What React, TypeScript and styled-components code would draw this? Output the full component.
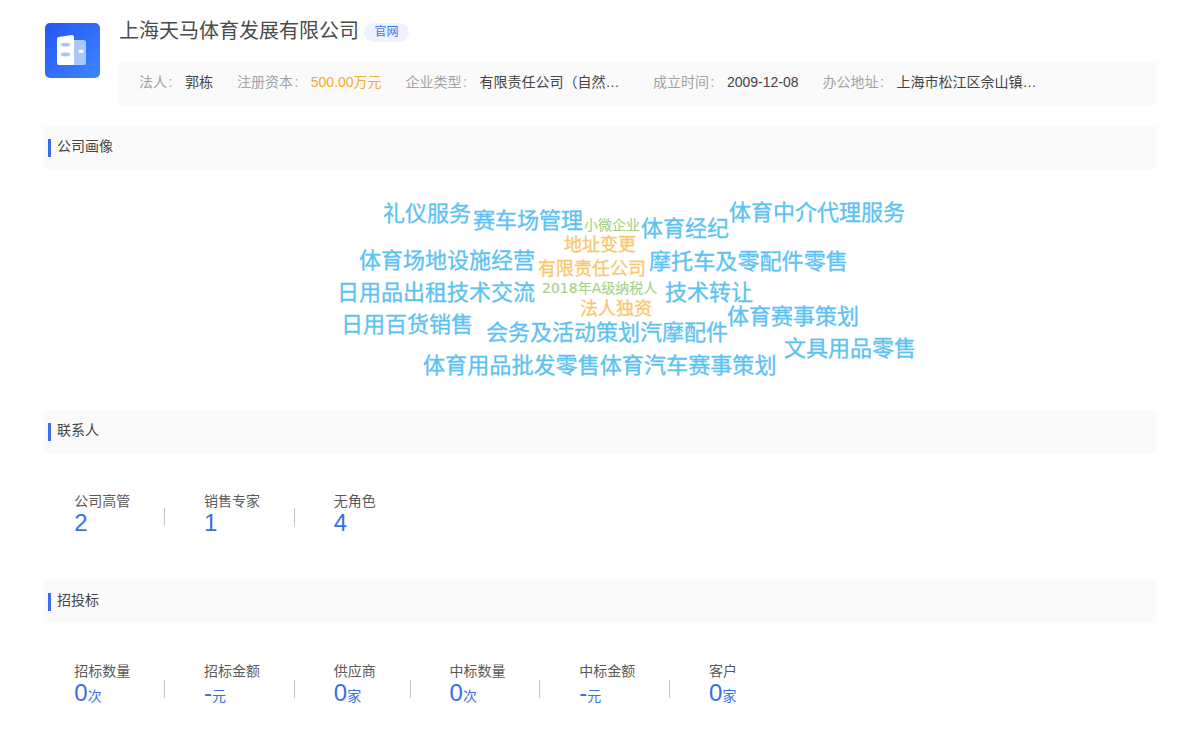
import React from "react";
import styled, { createGlobalStyle } from "styled-components";

const Global = createGlobalStyle`
  html, body { margin: 0; padding: 0; background: #fff; }
  body { font-family: "Liberation Sans", "Noto Sans CJK SC", sans-serif; color: #444; }
`;
const Page = styled.div`
  width: 1200px; height: 752px; overflow: hidden; box-sizing: border-box;
  padding: 0 44px;
`;
const Header = styled.header`
  display: flex; padding-top: 16px; height: 89px; box-sizing: content-box;
`;
const Logo = styled.svg`
  width: 55px; height: 55px; margin: 7px 19px 0 1px; flex: none;
`;
const HeaderBody = styled.div`
  flex: 1; min-width: 0; display: flex; flex-direction: column;
`;
const TitleRow = styled.div`
  display: flex; align-items: center; height: 30px;
`;
const Title = styled.h1`
  margin: 0; font-size: 20px; font-weight: 400; color: #4a4a4a; line-height: 30px;
`;
const Badge = styled.a`
  margin-left: 5px; margin-top: 3px; height: 19px; line-height: 19px; padding: 0 10.5px;
  border-radius: 10px; background: #eef3fd; color: #3f72e4; font-size: 12px;
`;
const InfoBar = styled.div`
  display: flex; align-items: center; height: 43px; margin-top: 16px; box-sizing: border-box;
  padding: 0 0 3px 20px; background: #fafafa; font-size: 14px; line-height: 20px;
`;
const InfoItem = styled.div`
  display: flex; margin-right: 24px; white-space: nowrap;
`;
const InfoLabel = styled.span`
  color: #a3a3a3; margin-right: 12px;
`;
const Colon = styled.span`
  margin-left: 1.5px; padding-right: 0.5px;
`;
const InfoValue = styled.span<{ $accent?: boolean; $clip?: boolean }>`
  color: ${(p) => (p.$accent ? "#f4ab35" : "#444")};
  ${(p) => (p.$clip ? "width: 149.5px; overflow: hidden; text-overflow: ellipsis;" : "")}
`;
const SectionHead = styled.div<{ $flush?: boolean }>`
  display: flex; align-items: center; height: 43px; background: #fafafa;
  padding-left: 4px; margin-top: ${(p) => (p.$flush ? 0 : 21)}px;
`;
const Bar = styled.i`
  display: block; width: 3px; height: 18px; background: #3a6ee8; margin-right: 6px;
`;
const SectionTitle = styled.h2`
  margin: -3px 0 0; font-size: 14px; font-weight: 400; color: #444; line-height: 16px;
`;
const Cloud = styled.div`
  position: relative; height: 241px;
  font-family: "DejaVu Sans", "Noto Sans CJK SC", sans-serif;
`;
const tones = { blue: "#5bc2f1", yellow: "#f9c86c", green: "#a6d184" };
const Word = styled.span<{ $x: number; $y: number; $size: number; $tone: keyof typeof tones }>`
  position: absolute; white-space: nowrap; line-height: 1; font-weight: 400;
  left: ${(p) => p.$x - 44}px; top: ${(p) => p.$y - 168 - p.$size / 2}px;
  font-size: ${(p) => p.$size}px; color: ${(p) => tones[p.$tone]};
  -webkit-text-stroke: ${(p) => (p.$size > 14 ? 0.3 : 0.1)}px ${(p) => tones[p.$tone]};
`;
const Stats = styled.div`
  display: flex; align-items: center; padding: 40px 0 43px 30.3px; margin-bottom: -21px;
`;
const Stat = styled.div`
  padding-right: 33.75px;
`;
const StatLabel = styled.div`
  font-size: 14px; line-height: 16px; color: #5a5a5a; white-space: nowrap;
`;
const StatValue = styled.div`
  font-size: 24px; line-height: 28px; color: #3a6ee8; white-space: nowrap;
`;
const Unit = styled.span`
  font-size: 14px;
`;
const Divider = styled.i`
  display: block; width: 1px; height: 18px; margin: 4px 39px 0 0; background: #c4c4c4;
`;

const words: [string, number, number, number, keyof typeof tones][] = [
  ["礼仪服务", 383, 213, 22, "blue"],
  ["赛车场管理", 473, 220, 22, "blue"],
  ["小微企业", 584, 224, 14, "green"],
  ["体育经纪", 641, 228, 22, "blue"],
  ["体育中介代理服务", 729, 212, 22, "blue"],
  ["地址变更", 564, 244, 18, "yellow"],
  ["体育场地设施经营", 359, 260, 22, "blue"],
  ["有限责任公司", 538, 268, 18, "yellow"],
  ["摩托车及零配件零售", 649, 260, 22.1, "blue"],
  ["日用品出租技术交流", 337, 292, 22, "blue"],
  ["2018年A级纳税人", 542, 287, 14, "green"],
  ["法人独资", 580, 308, 18, "yellow"],
  ["技术转让", 665, 292, 22, "blue"],
  ["日用百货销售", 341, 324, 22, "blue"],
  ["会务及活动策划汽摩配件", 486, 332, 22, "blue"],
  ["体育赛事策划", 727, 316, 22, "blue"],
  ["体育用品批发零售体育汽车赛事策划", 423, 364, 22.1, "blue"],
  ["文具用品零售", 784, 348, 22, "blue"],
];

type S = { label: string; value: string; unit?: string };
const StatRow = ({ items }: { items: S[] }) => (
  <Stats>
    {items.map((s, i) => (
      <React.Fragment key={s.label}>
        <Stat>
          <StatLabel>{s.label}</StatLabel>
          <StatValue>
            {s.value}
            {s.unit && <Unit>{s.unit}</Unit>}
          </StatValue>
        </Stat>
        {i < items.length - 1 && <Divider />}
      </React.Fragment>
    ))}
  </Stats>
);

const Section = ({ title, flush }: { title: string; flush?: boolean }) => (
  <SectionHead $flush={flush}>
    <Bar />
    <SectionTitle>{title}</SectionTitle>
  </SectionHead>
);

const Info = ({ label, children }: { label: string; children: React.ReactNode }) => (
  <InfoItem>
    <InfoLabel>{label}<Colon>:</Colon></InfoLabel>
    {children}
  </InfoItem>
);

export default function App() {
  return (
    <Page>
      <Global />
      <Header>
        <Logo viewBox="0 0 55 55">
          <defs>
            <linearGradient id="lg" x1="0" y1="0" x2="1" y2="1">
              <stop offset="0" stopColor="#2456f5" />
              <stop offset="1" stopColor="#3f85fb" />
            </linearGradient>
          </defs>
          <rect width="55" height="55" rx="5" fill="url(#lg)" />
          <path d="M29 17l9.5 0a2.5 2.5 0 0 1 2.5 2.5V40a2 2 0 0 1-2 2H29z" fill="#a9c8fc" />
          <path d="M12 16a2 2 0 0 1 1.6-2L27 12a2 2 0 0 1 2 2v28H14a2 2 0 0 1-2-2z" fill="#fff" />
          <rect x="16" y="20" width="9" height="3.6" rx="1.8" fill="#a9c4f8" />
          <rect x="16" y="29.6" width="9" height="3.6" rx="1.8" fill="#a9c4f8" />
          <rect x="33.5" y="26.8" width="5" height="3" rx="1" fill="#fff" />
        </Logo>
        <HeaderBody>
          <TitleRow>
            <Title>上海天马体育发展有限公司</Title>
            <Badge>官网</Badge>
          </TitleRow>
          <InfoBar>
            <Info label="法人"><InfoValue>郭栋</InfoValue></Info>
            <Info label="注册资本"><InfoValue $accent>500.00万元</InfoValue></Info>
            <Info label="企业类型"><InfoValue $clip>有限责任公司（自然人投资或控股）</InfoValue></Info>
            <Info label="成立时间"><InfoValue>2009-12-08</InfoValue></Info>
            <Info label="办公地址"><InfoValue $clip>上海市松江区佘山镇沈砖公路</InfoValue></Info>
          </InfoBar>
        </HeaderBody>
      </Header>
      <Section title="公司画像" />
      <Cloud>
        {words.map(([t, x, y, s, c]) => (
          <Word key={t} $x={x} $y={y} $size={s} $tone={c}>{t}</Word>
        ))}
      </Cloud>
      <Section title="联系人" flush />
      <StatRow items={[
        { label: "公司高管", value: "2" },
        { label: "销售专家", value: "1" },
        { label: "无角色", value: "4" },
      ]} />
      <Section title="招投标" />
      <StatRow items={[
        { label: "招标数量", value: "0", unit: "次" },
        { label: "招标金额", value: "-", unit: "元" },
        { label: "供应商", value: "0", unit: "家" },
        { label: "中标数量", value: "0", unit: "次" },
        { label: "中标金额", value: "-", unit: "元" },
        { label: "客户", value: "0", unit: "家" },
      ]} />
    </Page>
  );
}
